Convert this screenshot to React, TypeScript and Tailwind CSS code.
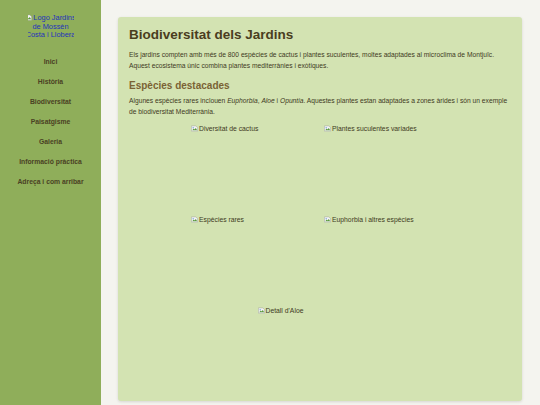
import React from 'react';

const navItems = [
  'Inici',
  'Història',
  'Biodiversitat',
  'Paisatgisme',
  'Galeria',
  'Informació pràctica',
  'Adreça i com arribar',
];

const images = [
  'Diversitat de cactus',
  'Plantes suculentes variades',
  'Espècies rares',
  'Euphorbia i altres espècies',
  "Detall d'Aloe",
];

function BrokenIcon() {
  return (
    <svg width="7" height="7" viewBox="0 0 16 16" className="inline-block mr-[1px] align-[-1px] shrink-0">
      <path d="M1 2h10l4 4v8H1z" fill="#f2f2f2" stroke="#9a9a9a" strokeWidth="1" />
      <path d="M3 12l3-4 2 2 3-3 3 5z" fill="#5a9a3c" />
      <circle cx="5" cy="6" r="1.5" fill="#6aa0d8" />
    </svg>
  );
}

function BrokenImage({ alt }: { alt: string }) {
  return (
    <div className="w-[125px] h-[83px] overflow-hidden text-[6.8px] leading-[10px] text-[#3f3a22] whitespace-nowrap">
      <BrokenIcon />
      {alt}
    </div>
  );
}

export default function App() {
  return (
    <div
      className="flex min-h-[405px] bg-[#f4f4ef]"
      style={{ fontFamily: '"Liberation Sans", Arial, sans-serif' }}
    >
      {/* Sidebar */}
      <aside className="w-[101px] shrink-0 bg-[#8fae5a] flex flex-col items-center pt-[14px]">
        <a className="block w-[46px] h-[27px] overflow-hidden text-[7.4px] leading-[8.5px] text-[#2233bb]">
          <div className="w-[70px] -ml-[12px] text-center whitespace-nowrap">
            <div>
              <BrokenIcon />
              Logo Jardins
            </div>
            <div>de Mossèn</div>
            <div>Costa i Llobera</div>
          </div>
        </a>
        <nav className="flex flex-col items-center mt-[16px] gap-[10px]">
          {navItems.map((item) => (
            <a
              key={item}
              className="text-[6.8px] leading-[10px] font-bold text-[#4a4124] whitespace-nowrap"
            >
              {item}
            </a>
          ))}
        </nav>
      </aside>

      {/* Main content */}
      <main className="flex-1 pl-[17px] pr-[18px] pt-[17px] pb-[4px]">
        <div className="bg-[#d3e3b2] rounded-[3px] shadow-[0_1px_3px_rgba(0,0,0,0.12)] h-[384px] px-[11px] pt-[10px]">
          <h1 className="text-[13.5px] leading-[16px] font-bold text-[#4a3d1e]">
            Biodiversitat dels Jardins
          </h1>
          <p className="mt-[5.5px] text-[6.7px] leading-[11px] text-[#3f3a22]">
            Els jardins compten amb més de 800 espècies de cactus i plantes suculentes, moltes adaptades al microclima de Montjuïc. Aquest ecosistema únic combina plantes mediterrànies i exòtiques.
          </p>
          <h2 className="mt-[9px] text-[10px] leading-[12px] font-bold text-[#7a6234]">
            Espècies destacades
          </h2>
          <p className="mt-[3.5px] text-[6.7px] leading-[11px] text-[#3f3a22]">
            Algunes espècies rares inclouen <em>Euphorbia</em>, <em>Aloe</em> i <em>Opuntia</em>. Aquestes plantes estan adaptades a zones àrides i són un exemple de biodiversitat Mediterrània.
          </p>
          <div className="mt-[7px] flex flex-wrap justify-center gap-x-[8px] gap-y-[8px]">
            {images.map((img) => (
              <BrokenImage key={img} alt={img} />
            ))}
          </div>
        </div>
      </main>
    </div>
  );
}
